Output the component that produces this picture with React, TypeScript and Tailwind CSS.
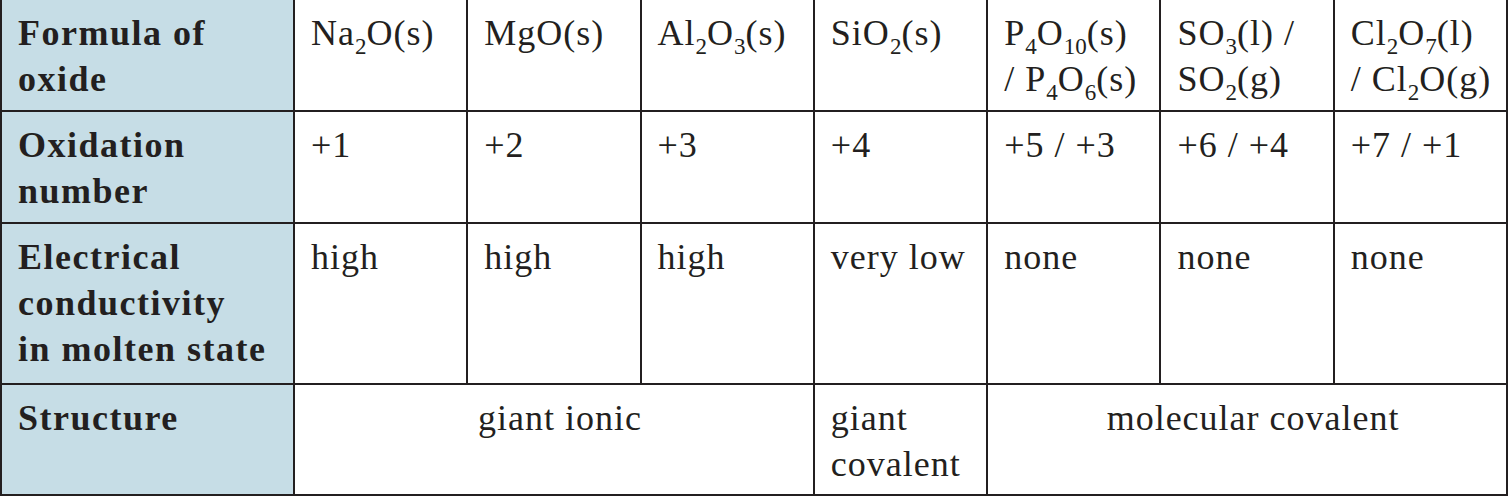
import React from "react";

const serif = { fontFamily: '"Liberation Serif", "Times New Roman", serif' };

function Head({ children }: { children: React.ReactNode }) {
  return (
    <div className="bg-[#c6dde6] pl-4 pr-2 pt-[10px] text-[36px] leading-[46px] font-bold tracking-[1.5px] text-[#231f20]">
      {children}
    </div>
  );
}

function Cell({
  children,
  className = "",
}: {
  children?: React.ReactNode;
  className?: string;
}) {
  return (
    <div
      className={`bg-white pl-4 pr-1 pt-[10px] text-[36px] leading-[46px] tracking-[1px] text-[#231f20] ${className}`}
    >
      {children}
    </div>
  );
}

const S = ({ n }: { n: string }) => (
  <sub className="-bottom-[0.4em] text-[0.64em] tracking-normal">{n}</sub>
);

export default function App() {
  return (
    <div className="min-h-screen bg-white" style={serif}>
      <div className="grid w-[1508px] grid-cols-[291px_repeat(7,minmax(0,1fr))] grid-rows-[110px_110px_159px_109px] gap-[2px] bg-[#231f20] px-[2px] pb-[2px]">
        {/* Formula row */}
        <Head>
          Formula of
          <br />
          oxide
        </Head>
        <Cell>
          Na<S n="2" />O(s)
        </Cell>
        <Cell>MgO(s)</Cell>
        <Cell>
          Al<S n="2" />O<S n="3" />(s)
        </Cell>
        <Cell>
          SiO<S n="2" />(s)
        </Cell>
        <Cell>
          P<S n="4" />O<S n="10" />(s)
          <br />/ P<S n="4" />O<S n="6" />(s)
        </Cell>
        <Cell>
          SO<S n="3" />(l) /
          <br />
          SO<S n="2" />(g)
        </Cell>
        <Cell>
          Cl<S n="2" />O<S n="7" />(l)
          <br />/ Cl<S n="2" />O(g)
        </Cell>

        {/* Oxidation number row */}
        <Head>
          Oxidation
          <br />
          number
        </Head>
        <Cell>+1</Cell>
        <Cell>+2</Cell>
        <Cell>+3</Cell>
        <Cell>+4</Cell>
        <Cell>+5 / +3</Cell>
        <Cell>+6 / +4</Cell>
        <Cell>+7 / +1</Cell>

        {/* Conductivity row */}
        <Head>
          Electrical
          <br />
          conductivity
          <br />
          in molten state
        </Head>
        <Cell>high</Cell>
        <Cell>high</Cell>
        <Cell>high</Cell>
        <Cell>very low</Cell>
        <Cell>none</Cell>
        <Cell>none</Cell>
        <Cell>none</Cell>

        {/* Structure row */}
        <Head>Structure</Head>
        <Cell className="col-span-3 pl-0 pr-0 text-center">giant ionic</Cell>
        <Cell>
          giant
          <br />
          covalent
        </Cell>
        <Cell className="col-span-3 pl-0 pr-0 text-center">
          molecular covalent
        </Cell>
      </div>
    </div>
  );
}
